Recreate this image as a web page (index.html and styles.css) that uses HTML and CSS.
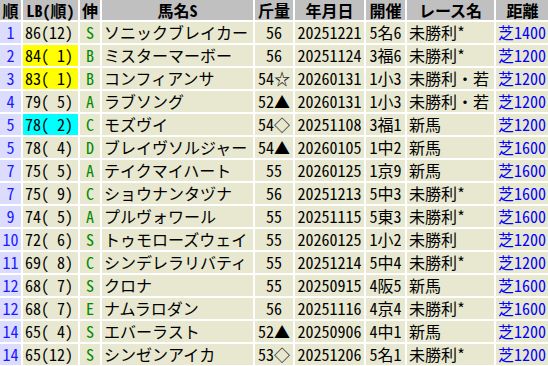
FILE: index.html
```html
<!DOCTYPE html>
<html lang="ja">
<head>
<meta charset="utf-8">
<link rel="stylesheet" href="styles.css">
</head>
<body>
<table class="tbl">
<colgroup>
<col class="w-no"><col class="w-lb"><col class="w-nb"><col class="w-name"><col class="w-kg"><col class="w-date"><col class="w-kai"><col class="w-race"><col class="w-dist">
</colgroup>
<thead>
<tr><th>順</th><th>LB(順)</th><th>伸</th><th>馬名S</th><th>斤量</th><th>年月日</th><th>開催</th><th>レース名</th><th>距離</th></tr>
</thead>
<tbody>
<tr><td class="no">1</td><td class="lb">86(12)</td><td class="nb">S</td><td class="txt">ソニックブレイカー</td><td class="c">56</td><td class="c">20251221</td><td class="c">5名6</td><td class="txt">未勝利*</td><td class="dist">芝1400</td></tr>
<tr><td class="no">2</td><td class="lb hy">84( 1)</td><td class="nb">B</td><td class="txt">ミスターマーボー</td><td class="c">56</td><td class="c">20251124</td><td class="c">3福6</td><td class="txt">未勝利*</td><td class="dist">芝1200</td></tr>
<tr><td class="no">3</td><td class="lb hy">83( 1)</td><td class="nb">B</td><td class="txt">コンフィアンサ</td><td class="c">54☆</td><td class="c">20260131</td><td class="c">1小3</td><td class="txt">未勝利・若</td><td class="dist">芝1200</td></tr>
<tr><td class="no">4</td><td class="lb">79( 5)</td><td class="nb">A</td><td class="txt">ラブソング</td><td class="c">52▲</td><td class="c">20260131</td><td class="c">1小3</td><td class="txt">未勝利・若</td><td class="dist">芝1200</td></tr>
<tr><td class="no">5</td><td class="lb hc">78( 2)</td><td class="nb">C</td><td class="txt">モズヴイ</td><td class="c">54◇</td><td class="c">20251108</td><td class="c">3福1</td><td class="txt">新馬</td><td class="dist">芝1200</td></tr>
<tr><td class="no">5</td><td class="lb">78( 4)</td><td class="nb">D</td><td class="txt">ブレイヴソルジャー</td><td class="c">54▲</td><td class="c">20260105</td><td class="c">1中2</td><td class="txt">新馬</td><td class="dist">芝1600</td></tr>
<tr><td class="no">7</td><td class="lb">75( 5)</td><td class="nb">A</td><td class="txt">テイクマイハート</td><td class="c">55</td><td class="c">20260125</td><td class="c">1京9</td><td class="txt">新馬</td><td class="dist">芝1600</td></tr>
<tr><td class="no">7</td><td class="lb">75( 9)</td><td class="nb">C</td><td class="txt">ショウナンタヅナ</td><td class="c">56</td><td class="c">20251213</td><td class="c">5中3</td><td class="txt">未勝利*</td><td class="dist">芝1600</td></tr>
<tr><td class="no">9</td><td class="lb">74( 5)</td><td class="nb">A</td><td class="txt">プルヴォワール</td><td class="c">55</td><td class="c">20251115</td><td class="c">5東3</td><td class="txt">未勝利*</td><td class="dist">芝1600</td></tr>
<tr><td class="no">10</td><td class="lb">72( 6)</td><td class="nb">S</td><td class="txt">トゥモローズウェイ</td><td class="c">55</td><td class="c">20260125</td><td class="c">1小2</td><td class="txt">未勝利</td><td class="dist">芝1200</td></tr>
<tr><td class="no">11</td><td class="lb">69( 8)</td><td class="nb">C</td><td class="txt">シンデレラリバティ</td><td class="c">55</td><td class="c">20251214</td><td class="c">5中4</td><td class="txt">未勝利*</td><td class="dist">芝1200</td></tr>
<tr><td class="no">12</td><td class="lb">68( 7)</td><td class="nb">S</td><td class="txt">クロナ</td><td class="c">55</td><td class="c">20250915</td><td class="c">4阪5</td><td class="txt">新馬</td><td class="dist">芝1600</td></tr>
<tr><td class="no">12</td><td class="lb">68( 7)</td><td class="nb">E</td><td class="txt">ナムラロダン</td><td class="c">56</td><td class="c">20251116</td><td class="c">4京4</td><td class="txt">未勝利*</td><td class="dist">芝1600</td></tr>
<tr><td class="no">14</td><td class="lb">65( 4)</td><td class="nb">S</td><td class="txt">エバーラスト</td><td class="c">52▲</td><td class="c">20250906</td><td class="c">4中1</td><td class="txt">新馬</td><td class="dist">芝1200</td></tr>
<tr><td class="no">14</td><td class="lb">65(12)</td><td class="nb">S</td><td class="txt">シンゼンアイカ</td><td class="c">53◇</td><td class="c">20251206</td><td class="c">5名1</td><td class="txt">未勝利*</td><td class="dist">芝1200</td></tr>
</tbody>
</table>
</body>
</html>
```
FILE: styles.css
```css
html, body {
  margin: 0;
  padding: 0;
  background: #ffffff;
  overflow: hidden;
}
.tbl {
  margin: -2px 0 0 -2px;
  border-collapse: separate;
  border-spacing: 2px;
  table-layout: fixed;
  width: 553px;
  font-family: "Noto Sans CJK JP", sans-serif;
  font-size: 16px;
  font-feature-settings: "hwid" 1;
  color: #000000;
}
.w-no { width: 21px; }
.w-lb { width: 55px; }
.w-nb { width: 20px; }
.w-name { width: 151px; }
.w-kg { width: 38px; }
.w-date { width: 69px; }
.w-kai { width: 39px; }
.w-race { width: 87px; }
.w-dist { width: 53px; }
.tbl th, .tbl td {
  height: 21px;
  padding: 0;
  line-height: 21px;
  white-space: pre;
  vertical-align: middle;
}
.tbl th {
  height: 20px;
  line-height: 20px;
  background: #c0c0c0;
  font-weight: bold;
  text-align: center;
}
.tbl td {
  background: #e8e8d0;
}
.tbl td.no {
  background: #dcdcff;
  color: #1a1aff;
  text-align: center;
}
.tbl td.lb {
  text-align: left;
  padding-left: 2px;
}
.tbl td.hy { background: #ffff00; }
.tbl td.hc { background: #00ffff; }
.tbl td.nb {
  color: #008a00;
  text-align: center;
}
.tbl td.txt {
  text-align: left;
  padding-left: 2px;
}
.tbl td.c {
  text-align: center;
}
.tbl td.dist {
  color: #0000ff;
  text-align: left;
  padding-left: 2px;
}
```
